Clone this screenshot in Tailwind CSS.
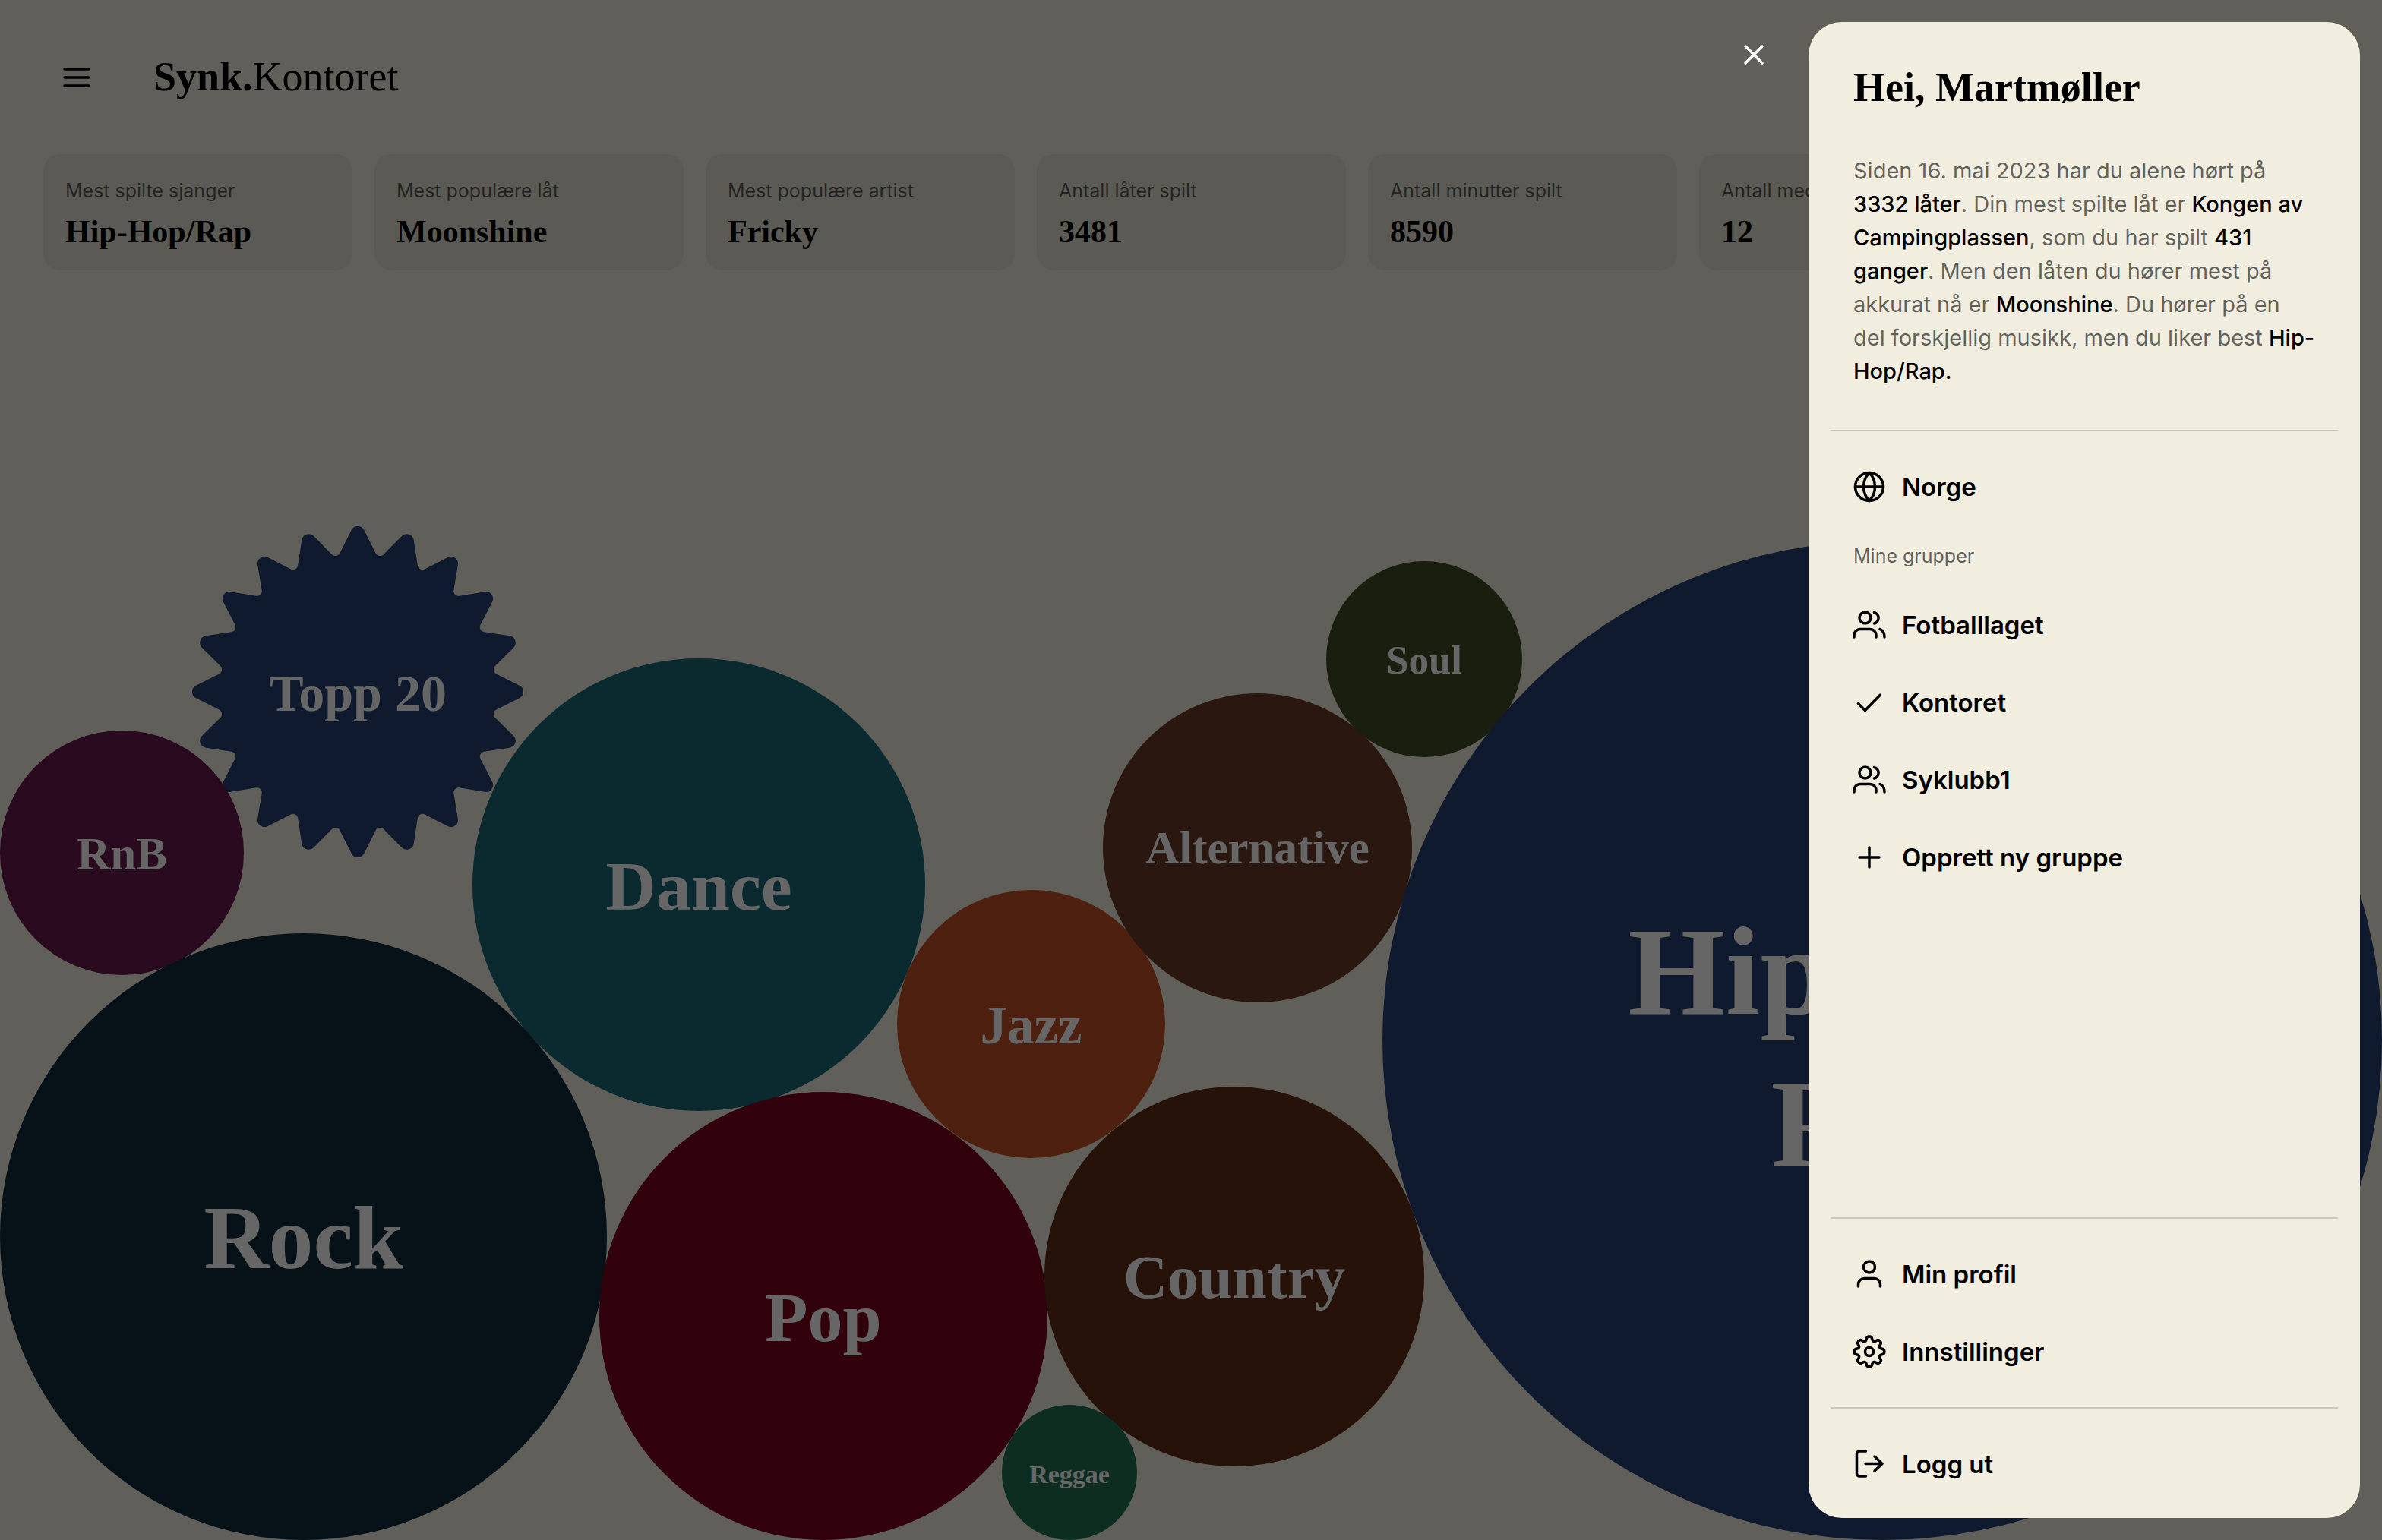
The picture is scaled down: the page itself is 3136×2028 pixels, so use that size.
<!DOCTYPE html>
<html lang="no">
<head>
<meta charset="utf-8">
<meta name="viewport" content="width=device-width, initial-scale=1">
<title>Synk.Kontoret</title>
<script src="https://cdn.jsdelivr.net/npm/@tailwindcss/browser@4"></script>
</head>
<body class="bg-[#f1eedf] text-black font-['Inter',sans-serif] overflow-hidden">

<div class="flex min-h-screen flex-col">
  <header class="flex items-center gap-[77px] px-[77px] pt-[65px] pb-[66px]">
    <button type="button" aria-label="Meny" class="h-12 w-12">
      <svg viewBox="0 0 48 48" class="h-12 w-12" fill="none" stroke="currentColor" stroke-width="3.5" stroke-linecap="round"><path d="M8 14H40M8 25H40M8 36H40"/></svg>
    </button>
    <a href="#" class="font-['Liberation_Serif',serif] text-[54px] leading-[72px]"><b>Synk.</b>Kontoret</a>
  </header>

  <section class="flex gap-[29px] overflow-hidden px-[57px]">
    <article class="w-[407px] shrink-0 rounded-[22px] bg-black/5 px-[29px] pt-7 pb-[25px]">
      <p class="text-[25px] leading-10 text-black/60">Mest spilte sjanger</p>
      <p class="pt-2 font-['Liberation_Serif',serif] text-[42px] leading-[52px] font-bold">Hip-Hop/Rap</p>
    </article>
    <article class="w-[407px] shrink-0 rounded-[22px] bg-black/5 px-[29px] pt-7 pb-[25px]">
      <p class="text-[25px] leading-10 text-black/60">Mest populære låt</p>
      <p class="pt-2 font-['Liberation_Serif',serif] text-[42px] leading-[52px] font-bold">Moonshine</p>
    </article>
    <article class="w-[407px] shrink-0 rounded-[22px] bg-black/5 px-[29px] pt-7 pb-[25px]">
      <p class="text-[25px] leading-10 text-black/60">Mest populære artist</p>
      <p class="pt-2 font-['Liberation_Serif',serif] text-[42px] leading-[52px] font-bold">Fricky</p>
    </article>
    <article class="w-[407px] shrink-0 rounded-[22px] bg-black/5 px-[29px] pt-7 pb-[25px]">
      <p class="text-[25px] leading-10 text-black/60">Antall låter spilt</p>
      <p class="pt-2 font-['Liberation_Serif',serif] text-[42px] leading-[52px] font-bold">3481</p>
    </article>
    <article class="w-[407px] shrink-0 rounded-[22px] bg-black/5 px-[29px] pt-7 pb-[25px]">
      <p class="text-[25px] leading-10 text-black/60">Antall minutter spilt</p>
      <p class="pt-2 font-['Liberation_Serif',serif] text-[42px] leading-[52px] font-bold">8590</p>
    </article>
    <article class="w-[407px] shrink-0 rounded-[22px] bg-black/5 px-[29px] pt-7 pb-[25px]">
      <p class="text-[25px] leading-10 text-black/60">Antall medlemmer</p>
      <p class="pt-2 font-['Liberation_Serif',serif] text-[42px] leading-[52px] font-bold">12</p>
    </article>
  </section>

  <!-- Genre bubbles, placed on a free canvas -->
  <main class="relative flex-1 font-['Liberation_Serif',serif] font-bold text-white">
    <a href="#" class="absolute bottom-[897px] left-[251px] flex h-[440px] w-[440px] items-center justify-center pt-1 text-[68px]">
      <svg viewBox="-220 -220 440 440" class="absolute inset-0 h-full w-full text-[#264173]"><path id="badge" fill="currentColor"/></svg>
      <span class="relative">Topp 20</span>
    </a>
    <a href="#" class="absolute bottom-[744px] left-0 flex h-[322px] w-[321px] items-center justify-center rounded-full bg-[#69194b] pt-1 text-[61px]">RnB</a>
    <a href="#" class="absolute bottom-[565px] left-[622px] flex h-[596px] w-[596px] items-center justify-center rounded-full bg-[#196978] pt-1 text-[92px]">Dance</a>
    <a href="#" class="absolute bottom-0 left-0 flex h-[799px] w-[799px] items-center justify-center rounded-full bg-[#0f2d3c] pt-1 text-[118px]">Rock</a>
    <a href="#" class="absolute bottom-0 left-[789px] flex h-[590px] w-[590px] items-center justify-center rounded-full bg-[#7b051c] pt-1 text-[92px]">Pop</a>
    <a href="#" class="absolute bottom-[503px] left-[1181px] flex h-[353px] w-[353px] items-center justify-center rounded-full bg-[#c05026] pt-1 text-[71px]">Jazz</a>
    <a href="#" class="absolute bottom-[708px] left-[1452px] flex h-[407px] w-[407px] items-center justify-center rounded-full bg-[#693a28] text-[61px]">Alternative</a>
    <a href="#" class="absolute bottom-[1031px] left-[1746px] flex h-[258px] w-[258px] items-center justify-center rounded-full bg-[#414b23] pt-1 text-[53px]">Soul</a>
    <a href="#" class="absolute bottom-[97px] left-[1375px] flex h-[500px] w-[500px] items-center justify-center rounded-full bg-[#5f2d14] pt-1 text-[81px]">Country</a>
    <a href="#" class="absolute bottom-0 left-[1319px] flex h-[178px] w-[178px] items-center justify-center rounded-full bg-[#1e7150] pt-1 text-[34px]">Reggae</a>
    <a href="#" class="absolute bottom-0 left-[1820px] flex h-[1316px] w-[1316px] items-center justify-center rounded-full bg-[#264173] pt-5 text-center text-[165px] leading-[201px]">Hip-Hop/<br>Rap</a>
  </main>
</div>

<!-- Drawer -->
<div class="fixed inset-0 flex items-start justify-end gap-12 bg-black/60 p-[29px]">
  <button type="button" aria-label="Lukk" class="mt-[19px] h-12 w-12 text-white">
    <svg viewBox="0 0 48 48" class="h-12 w-12" fill="none" stroke="currentColor" stroke-width="3.5" stroke-linecap="round"><path d="M13 13L35 35M35 13L13 35"/></svg>
  </button>
  <aside role="dialog" aria-label="Meny" class="flex h-full w-[726px] flex-col rounded-[44px] bg-[#f1eedf] px-[29px] pb-5">
    <div class="px-[30px] pt-[51px]">
      <h1 class="font-['Liberation_Serif',serif] text-[54px] leading-[70px] font-bold">Hei, Martmøller</h1>
      <p class="pt-[53px] text-[29px] leading-[44px] text-black/60">Siden 16. mai 2023 har du alene hørt på <b class="font-medium text-black">3332 låter</b>. Din mest spilte låt er <b class="font-medium text-black">Kongen av Campingplassen</b>, som du har spilt <b class="font-medium text-black">431 ganger</b>. Men den låten du hører mest på akkurat nå er <b class="font-medium text-black">Moonshine</b>. Du hører på en del forskjellig musikk, men du liker best <b class="font-medium text-black">Hip-Hop/Rap.</b></p>
    </div>
    <hr class="mt-[55px] mb-[22px] border-t-2 border-[#cac7b8]">
    <nav class="flex flex-1 flex-col text-[33px] leading-[44px] font-semibold">
      <a href="#" class="flex items-center gap-[21px] px-[29px] py-[29px]">
        <svg viewBox="0 0 44 44" class="h-11 w-11" fill="none" stroke="currentColor" stroke-width="3.5" stroke-linecap="round" stroke-linejoin="round"><circle cx="22" cy="22" r="18.5"/><path d="M3.5 22H40.5M22 3.5C12 14 12 30 22 40.5C32 30 32 14 22 3.5Z"/></svg>Norge</a>
      <h2 class="px-[30px] py-5 text-[25px] leading-10 font-normal text-black/60">Mine grupper</h2>
      <a href="#" class="flex items-center gap-[21px] px-[29px] py-[29px]">
        <svg viewBox="0 0 44 44" class="h-11 w-11" fill="none" stroke="currentColor" stroke-width="3.5" stroke-linecap="round" stroke-linejoin="round"><circle cx="16.500" cy="12.500" r="7.500"/><path d="M2 38V35.500A8 8 0 0 1 10 27.500H23A8 8 0 0 1 31 35.500V38M28.500 5.500A7.500 7.500 0 0 1 28.500 20M36 27.500Q42 30 42 38"/></svg>Fotballlaget</a>
      <a href="#" class="flex items-center gap-[21px] px-[29px] py-[29px]">
        <svg viewBox="0 0 44 44" class="h-11 w-11" fill="none" stroke="currentColor" stroke-width="3.5" stroke-linecap="round" stroke-linejoin="round"><path d="M7.500 23.500L16.500 32.500L36.500 12"/></svg>Kontoret</a>
      <a href="#" class="flex items-center gap-[21px] px-[29px] py-[29px]">
        <svg viewBox="0 0 44 44" class="h-11 w-11" fill="none" stroke="currentColor" stroke-width="3.5" stroke-linecap="round" stroke-linejoin="round"><circle cx="16.500" cy="12.500" r="7.500"/><path d="M2 38V35.500A8 8 0 0 1 10 27.500H23A8 8 0 0 1 31 35.500V38M28.500 5.500A7.500 7.500 0 0 1 28.500 20M36 27.500Q42 30 42 38"/></svg>Syklubb1</a>
      <a href="#" class="flex items-center gap-[21px] px-[29px] py-[29px]">
        <svg viewBox="0 0 44 44" class="h-11 w-11" fill="none" stroke="currentColor" stroke-width="3.5" stroke-linecap="round"><path d="M22 9V35M9 22H35"/></svg>Opprett ny gruppe</a>
    </nav>
    <hr class="my-[22px] border-t-2 border-[#cac7b8]">
    <nav class="text-[33px] leading-[44px] font-semibold">
      <a href="#" class="flex items-center gap-[21px] px-[29px] py-[29px]">
        <svg viewBox="0 0 44 44" class="h-11 w-11" fill="none" stroke="currentColor" stroke-width="3.5" stroke-linecap="round" stroke-linejoin="round"><circle cx="22" cy="12.500" r="7.500"/><path d="M7.500 38V35.500A8 8 0 0 1 15.500 27.500H28.500A8 8 0 0 1 36.500 35.500V38"/></svg>Min profil</a>
      <a href="#" class="flex items-center gap-[21px] px-[29px] py-[29px]">
        <svg viewBox="0 0 44 44" class="h-11 w-11" fill="none" stroke="currentColor" stroke-width="3.5" stroke-linecap="round" stroke-linejoin="round"><circle cx="22" cy="22" r="5.500"/><path id="gear"/></svg>Innstillinger</a>
    </nav>
    <hr class="my-[22px] border-t-2 border-[#cac7b8]">
    <button type="button" class="flex items-center gap-[21px] px-[29px] py-[29px] text-[33px] leading-[44px] font-semibold">
      <svg viewBox="0 0 44 44" class="h-11 w-11" fill="none" stroke="currentColor" stroke-width="3.5" stroke-linecap="round" stroke-linejoin="round"><path d="M17.500 5H9A3.500 3.500 0 0 0 5.500 8.500V34.500A3.500 3.500 0 0 0 9 38H17.500M17 21.500H39M29 12L39 21.500L29 31"/></svg>Logg ut</button>
  </aside>
</div>

<script>
  // Repeats one tooth around (cx, cy). Each step is a path command with its points;
  // the first step is the curve through the valley before the tooth.
  function ring(count, cx, cy, tooth) {
    const place = (i, [cmd, ...pts]) => {
      const a = i * 2 * Math.PI / count, c = Math.cos(a), s = Math.sin(a);
      return cmd + pts.map(([x, y]) => (cx + x * c - y * s).toFixed(2) + ' ' + (cy + x * s + y * c).toFixed(2)).join(' ');
    };
    let d = place(0, ['M', tooth[0][tooth[0].length - 1]]);
    for (let i = 0; i < count; i++) {
      for (const step of tooth.slice(1)) d += place(i, step);
      d += place(i + 1, tooth[0]);
    }
    return d + 'Z';
  }
  document.getElementById('badge').setAttribute('d', ring(20, 0, 0, [
    ['A6.4 6.4 0 0 0 ', [-23.6, -182.5]],
    ['L', [-8.3, -212.9]],
    ['A9.3 9.3 0 0 1 ', [8.3, -212.9]],
    ['L', [23.6, -182.5]]
  ]));
  document.getElementById('gear').setAttribute('d', ring(8, 22, 22, [
    ['Q', [-5, -12.1], [-3.9, -16]],
    ['C', [-3.4, -21.2], [3.4, -21.2], [3.9, -16]]
  ]));
</script>
</body>
</html>
